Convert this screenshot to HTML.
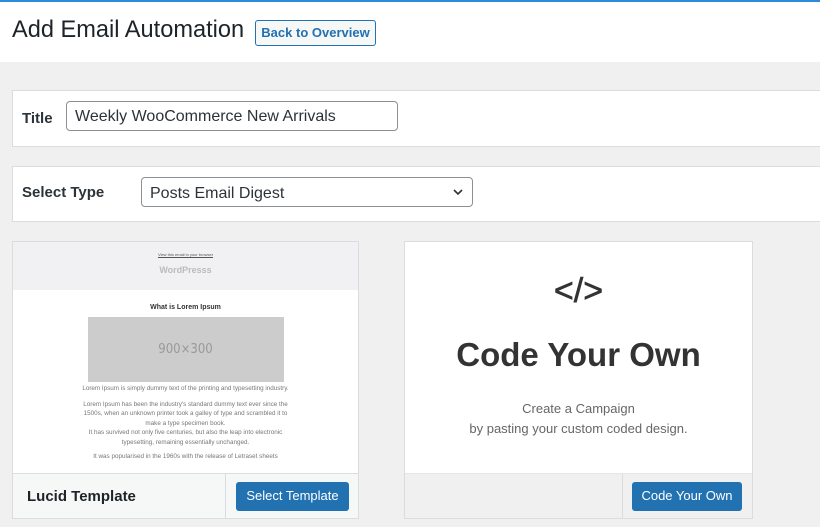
<!DOCTYPE html>
<html><head><style>
*{box-sizing:border-box;margin:0;padding:0}
body{width:820px;height:527px;overflow:hidden;background:#f0f0f1;font-family:"Liberation Sans",sans-serif;position:relative;color:#1d2327}
.abs{position:absolute}
.top{left:0;top:0;width:820px;height:62px;background:#fff;border-top:2px solid #2e8ad8}
h1{position:absolute;left:12px;top:17px;font-size:23.6px;font-weight:400;color:#1d2327}
.back{left:255px;top:20px;width:121px;height:26px;border:1px solid #2271b1;border-radius:3px;color:#2271b1;font-size:13px;font-weight:bold;text-align:center;line-height:24px;background:#f6f7f7}
.box{left:12px;width:820px;background:#fff;border:1px solid #dcdcde}
.lbl{font-size:15px;font-weight:bold;color:#2c3338}
.inp{border:1px solid #8c8f94;border-radius:4px;background:#fff;font-size:16px;color:#2c3338;padding-left:8px}
.card{background:#fff;border:1px solid #dcdcde}
.foot{background:#f6f7f7;border-top:1px solid #dcdcde}
.btn{background:#2271b1;color:#fff;border-radius:3px;font-size:13px;text-align:center;line-height:28px}
.p{font-size:6.3px;color:#777;text-align:center;line-height:9.5px}
</style></head><body>
<div class="abs top"></div>
<h1>Add Email Automation</h1>
<div class="abs back">Back to Overview</div>

<div class="abs box" style="top:90px;height:57px"></div>
<div class="abs lbl" style="left:22px;top:110px">Title</div>
<div class="abs inp" style="left:66px;top:101px;width:332px;height:30px;line-height:30px">Weekly WooCommerce New Arrivals</div>

<div class="abs box" style="top:166px;height:56px"></div>
<div class="abs lbl" style="left:22px;top:184px">Select Type</div>
<div class="abs inp" style="left:141px;top:177px;width:332px;height:30px;line-height:31px">Posts Email Digest
<svg style="position:absolute;right:8px;top:10px" width="12" height="8" viewBox="0 0 12 8"><path d="M2 2l4 4 4-4" fill="none" stroke="#2c3338" stroke-width="1.6"/></svg></div>

<div class="abs card" style="left:12px;top:241px;width:347px;height:278px;overflow:hidden">
 <div style="height:48px;background:#f1f1f3;text-align:center">
  <div style="font-size:4px;color:#555;text-decoration:underline;padding-top:10px">View this email in your browser</div>
  <div style="font-size:9px;color:#bbb;font-weight:bold;margin-top:8px">WordPresss</div>
 </div>
 <div style="text-align:center;font-size:7px;font-weight:bold;color:#333;margin-top:14px">What is Lorem Ipsum</div>
 <div style="margin:6px auto 0;width:196px;height:65px;background:#ccc;color:#999;font-size:13px;text-align:center;line-height:65px;font-family:'DejaVu Sans Condensed','Liberation Sans Narrow',sans-serif">900×300</div>
 <div class="p" style="margin:2px 64px 0">Lorem Ipsum is simply dummy text of the printing and typesetting industry.</div>
 <div class="p" style="margin:6px 64px 0">Lorem Ipsum has been the industry's standard dummy text ever since the 1500s, when an unknown printer took a galley of type and scrambled it to make a type specimen book.<br>It has survived not only five centuries, but also the leap into electronic typesetting, remaining essentially unchanged.</div>
 <div class="p" style="margin:5px 64px 0">It was popularised in the 1960s with the release of Letraset sheets</div>
</div>
<div class="abs foot" style="left:13px;top:473px;width:345px;height:45px"></div>
<div class="abs" style="left:225px;top:474px;width:1px;height:44px;background:#dcdcde"></div>
<div class="abs" style="left:27px;top:488px;font-size:15px;font-weight:bold;color:#1d2327">Lucid Template</div>
<div class="abs btn" style="left:236px;top:482px;width:113px;height:29px">Select Template</div>

<div class="abs card" style="left:404px;top:241px;width:349px;height:278px"></div>
<div class="abs" style="left:405px;top:272px;width:347px;text-align:center;font-size:34px;color:#333;-webkit-text-stroke:0.6px #333">&lt;/&gt;</div>
<div class="abs" style="left:405px;top:336px;width:347px;text-align:center;font-size:33px;font-weight:bold;color:#333">Code Your Own</div>
<div class="abs" style="left:405px;top:399px;width:347px;text-align:center;font-size:13px;color:#666;line-height:20px">Create a Campaign<br>by pasting your custom coded design.</div>
<div class="abs" style="left:405px;top:473px;width:347px;height:45px;background:#f0f0f1;border-top:1px solid #e5e5e5"></div>
<div class="abs" style="left:622px;top:474px;width:1px;height:44px;background:#dcdcde"></div>
<div class="abs btn" style="left:632px;top:482px;width:110px;height:29px">Code Your Own</div>
</body></html>
